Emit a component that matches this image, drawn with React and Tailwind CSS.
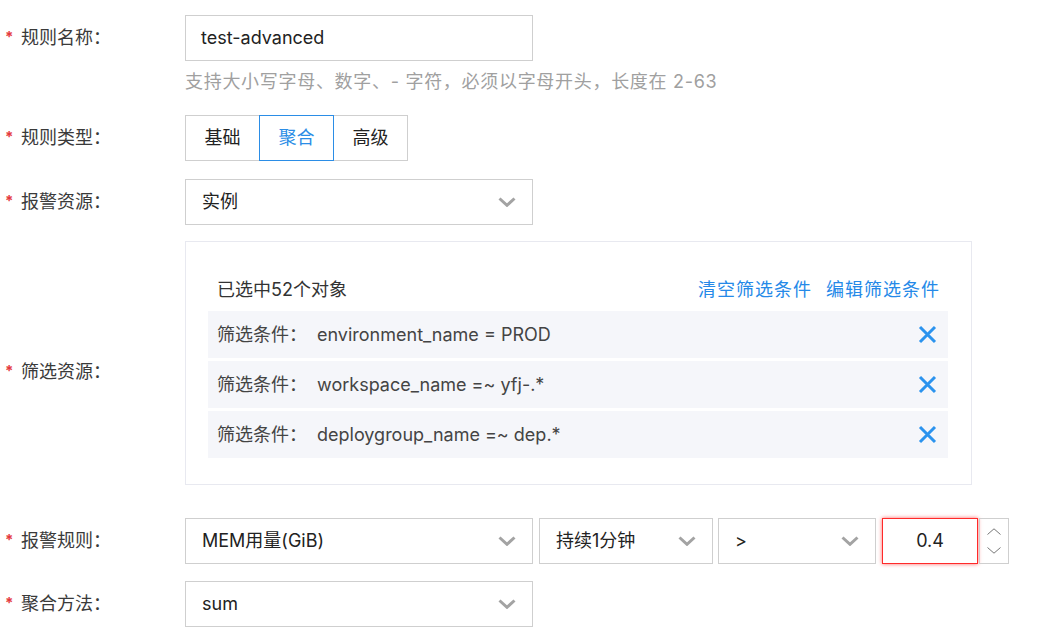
import React from "react";

const Chevron = () => (
  <svg width="18" height="10" viewBox="0 0 18 10" className="shrink-0">
    <path d="M1.5 1.5 L9 8.3 L16.5 1.5" fill="none" stroke="#a3a3a3" strokeWidth="3" />
  </svg>
);

const XIcon = () => (
  <svg width="19" height="19" viewBox="0 0 19 19" className="shrink-0">
    <path d="M2 2 L17 17 M17 2 L2 17" fill="none" stroke="#2b93ee" strokeWidth="3" />
  </svg>
);

const Label = ({ children, extra = "" }) => (
  <div className={"w-[185px] shrink-0 flex items-center pl-[5px] text-[#3a3a3a] " + extra}>
    <span className="w-[16px] text-[#e4393c] text-[15px] font-bold leading-none relative -top-[2px]">*</span>
    <span>{children}</span>
  </div>
);

const Select = ({ value, w }) => (
  <div className={"h-[46px] border border-[#cfcfcf] bg-white flex items-center justify-between pl-[16px] pr-[16px] text-[#222] " + w}>
    <span>{value}</span>
    <Chevron />
  </div>
);

const FilterRow = ({ text }) => (
  <div className="h-[47px] bg-[#f5f6fa] flex items-center justify-between pl-[9px] pr-[11px] text-[#444]">
    <div className="flex items-center">
      <span className="w-[100px]">筛选条件：</span>
      <span>{text}</span>
    </div>
    <XIcon />
  </div>
);

export default function App() {
  return (
    <div
      className="w-[1038px] h-[636px] bg-white overflow-hidden pt-[15px] text-[18px] leading-[26px]"
      style={{ fontFamily: 'Inter, "Noto Sans CJK SC", sans-serif' }}
    >
      {/* name */}
      <div className="flex items-center">
        <Label>规则名称：</Label>
        <div className="w-[348px] h-[46px] border border-[#cfcfcf] flex items-center pl-[15px] text-[#222]">
          test-advanced
        </div>
      </div>
      <div className="flex mt-[8px]">
        <div className="w-[185px] shrink-0" />
        <div className="text-[#a0a0a0] text-[18px] tracking-[0.7px] whitespace-nowrap">支持大小写字母、数字、- 字符，必须以字母开头，长度在 2-63</div>
      </div>

      {/* type */}
      <div className="flex items-center mt-[20px]">
        <Label>规则类型：</Label>
        <div className="flex h-[46px]">
          <div className="w-[74px] border border-[#cfcfcf] border-r-0 flex items-center justify-center text-[#222]">基础</div>
          <div className="w-[75px] border border-[#2b8de6] flex items-center justify-center text-[#2b8de6]">聚合</div>
          <div className="w-[74px] border border-[#cfcfcf] border-l-0 flex items-center justify-center text-[#222]">高级</div>
        </div>
      </div>

      {/* resource */}
      <div className="flex items-center mt-[18px]">
        <Label>报警资源：</Label>
        <Select value="实例" w="w-[348px]" />
      </div>

      {/* filter */}
      <div className="flex items-stretch mt-[16px]">
        <Label extra="pt-[18px]">筛选资源：</Label>
        <div className="w-[787px] h-[244px] border border-[#e8e9f0] pl-[22px] pr-[23px] pt-[30px]">
          <div className="h-[36px] flex items-center justify-between pl-[9px] pr-[8px] mb-[3px]">
            <span className="text-[#333]">已选中52个对象</span>
            <div className="flex gap-[14px] text-[#2589e8] tracking-[1px]">
              <span>清空筛选条件</span>
              <span>编辑筛选条件</span>
            </div>
          </div>
          <div className="flex flex-col gap-[3px]">
            <FilterRow text="environment_name = PROD" />
            <FilterRow text="workspace_name =~ yfj-.*" />
            <FilterRow text="deploygroup_name =~ dep.*" />
          </div>
        </div>
      </div>

      {/* rule */}
      <div className="flex items-center mt-[33px]">
        <Label>报警规则：</Label>
        <Select value="MEM用量(GiB)" w="w-[348px]" />
        <div className="ml-[6px]">
          <Select value="持续1分钟" w="w-[174px]" />
        </div>
        <div className="ml-[5px]">
          <Select value=">" w="w-[158px]" />
        </div>
        <div className="ml-[6px] w-[96px] h-[46px] border border-[#ff2a2a] shadow-[0_0_4px_rgba(255,0,0,0.6)] flex items-center justify-center text-[#222]">
          0.4
        </div>
        <div className="ml-[1px] w-[30px] h-[46px] border border-[#cfcfcf] flex flex-col items-center justify-center gap-[12px]">
          <svg width="14" height="7" viewBox="0 0 14 7">
            <path d="M0.5 6.5 L7 0.8 L13.5 6.5" fill="none" stroke="#777" strokeWidth="1" />
          </svg>
          <svg width="14" height="7" viewBox="0 0 14 7">
            <path d="M0.5 0.5 L7 6.2 L13.5 0.5" fill="none" stroke="#777" strokeWidth="1" />
          </svg>
        </div>
      </div>

      {/* agg */}
      <div className="flex items-center mt-[17px]">
        <Label>聚合方法：</Label>
        <Select value="sum" w="w-[348px]" />
      </div>
    </div>
  );
}
